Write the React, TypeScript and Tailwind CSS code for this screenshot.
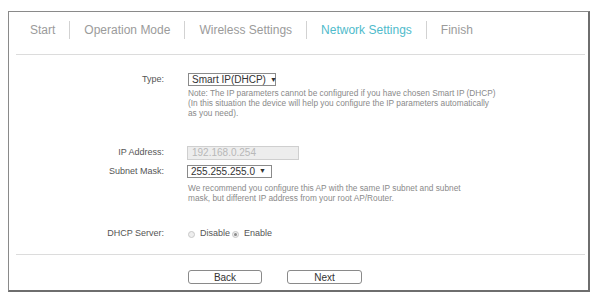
const tabs = [
  { label: "Start", active: false },
  { label: "Operation Mode", active: false },
  { label: "Wireless Settings", active: false },
  { label: "Network Settings", active: true },
  { label: "Finish", active: false },
];

const font = "font-['Liberation_Sans',Arial,sans-serif]";

const Label = ({ children }: { children: React.ReactNode }) => (
  <div className="w-[155px] shrink-0 text-right text-[9px] text-[#555]">{children}</div>
);

const Radio = ({ checked }: { checked?: boolean }) => (
  <span className="flex h-[7px] w-[7px] items-center justify-center rounded-full border border-[#c8c8c8] bg-[#eee]">
    {checked && <span className="h-[3px] w-[3px] rounded-full bg-[#8a8a8a]" />}
  </span>
);

export default function App() {
  return (
    <div className={`min-h-[300px] w-[599px] bg-white pt-[11px] ${font}`}>
      <div className="ml-[8px] w-[582px] border-t border-l border-r-2 border-b-2 border-t-[#8a8a8a] border-l-[#8a8a8a] border-r-[#6e6e6e] border-b-[#6e6e6e] pb-[6px]">
        {/* step tabs */}
        <div className="flex pl-[7px] pt-[9px]">
          {tabs.map((t, i) => (
            <div
              key={t.label}
              className={`flex h-[18px] items-center whitespace-nowrap px-[14px] text-[12px] ${
                i > 0 ? "border-l border-[#d2d2d2]" : ""
              } ${t.active ? "text-[#4fbbcb]" : "text-[#9b9b9b]"}`}
            >
              {t.label}
            </div>
          ))}
        </div>
        <div className="ml-[7px] mr-[3px] mt-[15px] h-px bg-[#dcdcdc]" />

        {/* type */}
        <div className="mt-[18px] flex items-center gap-[24px]">
          <Label>Type:</Label>
          <div className="flex h-[13px] w-[88px] items-center whitespace-nowrap border border-[#8a8a8a] pl-[3px] text-[10px] text-[#333]">
            Smart IP(DHCP)
            <span className="ml-[4px] text-[7px]">▼</span>
          </div>
        </div>
        <div className="ml-[179px] mt-[1px] w-[340px] text-[8.3px] leading-[10px] text-[#8a8a8a]">
          Note: The IP parameters cannot be configured if you have chosen Smart IP (DHCP)
          <br />
          (In this situation the device will help you configure the IP parameters automatically
          <br />
          as you need).
        </div>

        {/* ip address */}
        <div className="mt-[28px] flex items-center gap-[24px]">
          <Label>IP Address:</Label>
          <div className="-ml-px flex h-[14px] w-[112px] items-center border border-[#cfcfcf] bg-[#ededed] pl-[4px] text-[10px] text-[#b8b8b8]">
            192.168.0.254
          </div>
        </div>
        <div className="mt-[5px] flex items-center gap-[24px]">
          <Label>Subnet Mask:</Label>
          <div className="-ml-px flex h-[13px] w-[85px] items-center whitespace-nowrap border border-[#8a8a8a] pl-[3px] text-[10px] text-[#333]">
            255.255.255.0
            <span className="ml-[4px] text-[7px]">▼</span>
          </div>
        </div>
        <div className="ml-[179px] mt-[5px] w-[340px] text-[8.3px] leading-[10px] text-[#8a8a8a]">
          We recommend you configure this AP with the same IP subnet and subnet
          <br />
          mask, but different IP address from your root AP/Router.
        </div>

        {/* dhcp server */}
        <div className="mt-[26px] flex h-[10px] items-center gap-[24px]">
          <Label>DHCP Server:</Label>
          <div className="flex items-center text-[9px] text-[#555]">
            <Radio />
            <span className="ml-[5px] mr-[2px]">Disable</span>
            <Radio checked />
            <span className="ml-[5px]">Enable</span>
          </div>
        </div>

        <div className="ml-[7px] mr-[3px] mt-[15px] h-px bg-[#dcdcdc]" />

        {/* buttons */}
        <div className="ml-[179px] mt-[15px] flex gap-[25px]">
          <button className="flex h-[14px] w-[74px] items-center justify-center rounded-[3px] border border-[#8a8a8a] bg-white text-[10px] text-[#333]">
            Back
          </button>
          <button className="flex h-[14px] w-[75px] items-center justify-center rounded-[3px] border border-[#8a8a8a] bg-white text-[10px] text-[#333]">
            Next
          </button>
        </div>
      </div>
    </div>
  );
}
